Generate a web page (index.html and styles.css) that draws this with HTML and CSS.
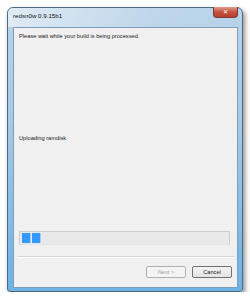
FILE: index.html
```html
<!DOCTYPE html>
<html lang="en">
<head>
    <meta charset="UTF-8">
    <meta name="viewport" content="width=device-width, initial-scale=1.0">
    <title>redsn0w 0.9.15b1</title>
    <link rel="stylesheet" href="styles.css">
</head>
<body>
    <div class="window">
        <div class="titlebar">
            <span class="title">redsn0w 0.9.15b1</span>
            <span class="close">&#x2715;</span>
        </div>
        <div class="client">
            <p class="intro">Please wait while your build is being processed.</p>
            <p class="status">Uploading ramdisk</p>
            <div class="progress">
                <span class="block"></span>
                <span class="block"></span>
            </div>
            <div class="separator"></div>
            <div class="buttons">
                <button class="btn" disabled>Next &gt;</button>
                <button class="btn">Cancel</button>
            </div>
        </div>
    </div>
</body>
</html>
```

FILE: styles.css
```css
body {
    margin: 0;
    padding: 7px 0 0 7px;
    background: #fff;
    font-family: "Liberation Sans", "DejaVu Sans", sans-serif;
    color: #222;
}
.window {
    box-sizing: border-box;
    width: 236px;
    height: 285px;
    display: flex;
    flex-direction: column;
    padding: 0 4px 3px 5px;
    border: 1px solid #4d6a82;
    border-radius: 6px 6px 3px 3px;
    background: linear-gradient(to bottom, #b9d3e8 0%, #a6c9e4 40%, #6cb2e6 100%);
    box-shadow: 2px 3px 5px rgba(0, 0, 0, 0.45);
}
.titlebar {
    height: 19px;
    display: flex;
    align-items: flex-start;
    justify-content: space-between;
    background: linear-gradient(to right, rgba(255,255,255,0.55), rgba(255,255,255,0.1) 60%, rgba(255,255,255,0));
    margin: 0 -4px 0 -5px;
    padding: 0 4px 0 5px;
    border-radius: 5px 5px 0 0;
}
.title {
    font-size: 6.2px;
    line-height: 8px;
    margin-top: 4px;
    color: #111;
}
.close {
    width: 25px;
    height: 11px;
    margin-top: -1px;
    box-sizing: border-box;
    border: 1px solid #7a3a3a;
    border-top: none;
    border-radius: 0 0 4px 4px;
    background: linear-gradient(to bottom, #e0a090, #c64f3d 50%, #b8402e);
    color: #fff;
    font-family: "DejaVu Sans", sans-serif;
    font-size: 6px;
    line-height: 10px;
    text-align: center;
    font-weight: bold;
}
.client {
    flex: 1;
    display: flex;
    flex-direction: column;
    background: #f0f0f0;
    border: 1px solid #7f9db9;
    padding: 0 5px;
}
.intro, .status {
    margin: 0;
    font-size: 5.7px;
    line-height: 8px;
    color: #222;
}
.intro {
    margin-top: 4px;
}
.status {
    margin-top: 94px;
}
.progress {
    margin-top: 89px;
    height: 14px;
    box-sizing: border-box;
    display: flex;
    gap: 1px;
    padding: 1px 2px;
    border: 1px solid #cdcdcd;
    border-bottom-color: #e4e4e4;
    background: #e9e9e9;
    margin-right: 2px;
}
.block {
    width: 8px;
    background: #3399ff;
    border-right: 1px solid #a8cdf5;
}
.separator {
    margin: 11px -2px 0 -2px;
    height: 1px;
    background: #d5d5d5;
    border-bottom: 1px solid #fff;
}
.buttons {
    margin-top: 8px;
    display: flex;
    justify-content: flex-end;
    gap: 6px;
}
.btn {
    width: 40px;
    height: 12px;
    padding: 0;
    font-family: inherit;
    font-size: 5.7px;
    border: 1px solid #707070;
    border-radius: 2px;
    background: linear-gradient(to bottom, #f2f2f2, #e4e4e4);
    color: #222;
}
.btn:disabled {
    border-color: #b0b0b0;
    background: #f4f4f4;
    color: #a0a0a0;
}
```
